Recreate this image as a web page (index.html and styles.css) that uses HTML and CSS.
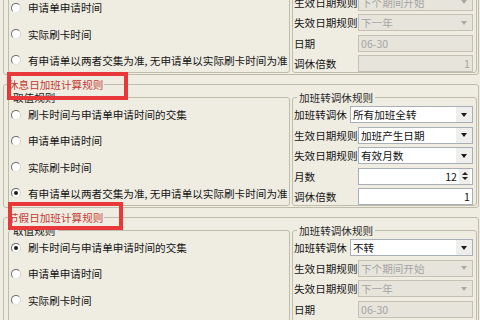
FILE: index.html
```html
<!DOCTYPE html>
<html lang="zh-CN">
<head>
    <meta charset="UTF-8">
    <meta name="viewport" content="width=device-width, initial-scale=1.0">
    <title>加班计算规则</title>
    <link rel="stylesheet" href="styles.css">
</head>
<body>
<div class="page">

    <fieldset class="rule">
        <legend class="rule-title">工作日加班计算规则</legend>
        <div class="rule-body">
            <fieldset class="group pick">
                <legend>取值规则</legend>
                <label class="opt"><input type="radio" name="work" checked><span>刷卡时间与申请单申请时间的交集</span></label>
                <label class="opt"><input type="radio" name="work"><span>申请单申请时间</span></label>
                <label class="opt"><input type="radio" name="work"><span>实际刷卡时间</span></label>
                <label class="opt"><input type="radio" name="work"><span>有申请单以两者交集为准, 无申请单以实际刷卡时间为准</span></label>
            </fieldset>
            <fieldset class="group convert">
                <legend>加班转调休规则</legend>
                <div class="field wide"><span class="name">加班转调休</span><div class="combo"><span class="val">不转</span><i class="arrow"></i></div></div>
                <div class="field"><span class="name">生效日期规则</span><div class="combo off"><span class="val">下个期间开始</span><i class="arrow"></i></div></div>
                <div class="field"><span class="name">失效日期规则</span><div class="combo off"><span class="val">下一年</span><i class="arrow"></i></div></div>
                <div class="field"><span class="name">日期</span><div class="combo off"><span class="val">06-30</span></div></div>
                <div class="field"><span class="name">调休倍数</span><div class="combo off num"><span class="val">1</span></div></div>
            </fieldset>
        </div>
    </fieldset>

    <fieldset class="rule">
        <legend class="rule-title">休息日加班计算规则<span class="mark mark-rest"></span></legend>
        <div class="rule-body">
            <fieldset class="group pick">
                <legend>取值规则</legend>
                <label class="opt"><input type="radio" name="rest"><span>刷卡时间与申请单申请时间的交集</span></label>
                <label class="opt"><input type="radio" name="rest"><span>申请单申请时间</span></label>
                <label class="opt"><input type="radio" name="rest"><span>实际刷卡时间</span></label>
                <label class="opt"><input type="radio" name="rest" checked><span>有申请单以两者交集为准, 无申请单以实际刷卡时间为准</span></label>
            </fieldset>
            <fieldset class="group convert">
                <legend>加班转调休规则</legend>
                <div class="field wide"><span class="name">加班转调休</span><div class="combo"><span class="val">所有加班全转</span><i class="arrow"></i></div></div>
                <div class="field"><span class="name">生效日期规则</span><div class="combo"><span class="val">加班产生日期</span><i class="arrow"></i></div></div>
                <div class="field"><span class="name">失效日期规则</span><div class="combo"><span class="val">有效月数</span><i class="arrow"></i></div></div>
                <div class="field"><span class="name">月数</span><div class="combo num"><span class="val">12</span><i class="spin"><b class="up"></b><b class="down"></b></i></div></div>
                <div class="field"><span class="name">调休倍数</span><div class="combo num"><span class="val">1</span></div></div>
            </fieldset>
        </div>
    </fieldset>

    <fieldset class="rule">
        <legend class="rule-title">节假日加班计算规则<span class="mark mark-holiday"></span></legend>
        <div class="rule-body">
            <fieldset class="group pick">
                <legend>取值规则</legend>
                <label class="opt"><input type="radio" name="holiday" checked><span>刷卡时间与申请单申请时间的交集</span></label>
                <label class="opt"><input type="radio" name="holiday"><span>申请单申请时间</span></label>
                <label class="opt"><input type="radio" name="holiday"><span>实际刷卡时间</span></label>
                <label class="opt"><input type="radio" name="holiday"><span>有申请单以两者交集为准, 无申请单以实际刷卡时间为准</span></label>
            </fieldset>
            <fieldset class="group convert">
                <legend>加班转调休规则</legend>
                <div class="field wide"><span class="name">加班转调休</span><div class="combo"><span class="val">不转</span><i class="arrow"></i></div></div>
                <div class="field"><span class="name">生效日期规则</span><div class="combo off"><span class="val">下个期间开始</span><i class="arrow"></i></div></div>
                <div class="field"><span class="name">失效日期规则</span><div class="combo off"><span class="val">下一年</span><i class="arrow"></i></div></div>
                <div class="field"><span class="name">日期</span><div class="combo off"><span class="val">06-30</span></div></div>
                <div class="field"><span class="name">调休倍数</span><div class="combo off num"><span class="val">1</span></div></div>
            </fieldset>
        </div>
    </fieldset>

</div>
</body>
</html>
```

FILE: styles.css
```css
* {
    box-sizing: border-box;
}
body {
    margin: 0;
    height: 320px;
    overflow: hidden;
    background-color: #efede2;
    color: #141414;
    font-family: "Noto Sans CJK SC", "Noto Sans", sans-serif;
    font-size: 10.6px;
}
.page {
    margin-top: -55px;
}

/* outer group box */
.rule {
    margin: 0 1px 3px 3px;
    padding: 0 1px 1px 4px;
    min-width: 0;
    border: 1px solid #bfbcab;
    border-radius: 3px;
}
.rule-title {
    position: relative;
    padding: 0 1px 0 0;
    height: 13px;
    line-height: 13px;
    color: #c23a33;
    white-space: nowrap;
}
.rule-body {
    display: grid;
    grid-template-columns: 282px 1fr;
    column-gap: 2px;
}

/* red note boxes */
.mark {
    position: absolute;
    height: 28px;
    border: 4px solid #e8383a;
    z-index: 2;
}
.mark-rest {
    top: -6px;
    left: -1px;
    width: 121px;
}
.mark-holiday {
    top: -9px;
    left: 0;
    width: 115px;
}

/* inner group boxes */
.group {
    margin: 0;
    min-width: 0;
    border: 1px solid #bfbcab;
    border-radius: 3px;
}
.group legend {
    height: 13px;
    line-height: 13px;
    white-space: nowrap;
}
.pick {
    padding: 0 0 0 1px;
}
.pick legend {
    padding: 0 3px;
}
.convert {
    padding: 2px 3px 0 1px;
}
.convert legend {
    margin-left: 3px;
    padding: 0 2px;
    color: #2a2a2a;
}

/* radio rows */
.opt {
    display: flex;
    align-items: center;
    height: 21.5px;
    margin-bottom: 4.7px;
    white-space: nowrap;
}
.opt:last-child {
    margin-bottom: 0;
}
.opt input {
    appearance: none;
    -webkit-appearance: none;
    flex: none;
    width: 10px;
    height: 10px;
    margin: 0 7px 0 1px;
    border: 1px solid;
    border-color: #6a6a6a #d6d4ca #e4e2d8 #6a6a6a;
    border-radius: 50%;
    background: #fff;
    position: relative;
}
.opt input:checked::after {
    content: "";
    position: absolute;
    top: 2px;
    left: 2px;
    width: 4px;
    height: 4px;
    border-radius: 50%;
    background: #1c1c1c;
}

/* label + field rows */
.field {
    display: flex;
    align-items: center;
    height: 17px;
    margin-bottom: 3.5px;
    white-space: nowrap;
}
.field:last-child {
    margin-bottom: 0;
}
.field .name {
    flex: none;
    width: 64px;
}
.field.wide .name {
    width: auto;
    margin-right: 3px;
}
.combo {
    flex: 1;
    display: flex;
    align-items: center;
    height: 17px;
    padding-left: 2px;
    border: 1px solid #a9afb6;
    background: #fff;
    color: #111;
    overflow: hidden;
}
.combo .val {
    flex: 1;
    line-height: 15px;
}
.combo.num .val {
    text-align: right;
    padding-right: 2px;
}
.combo.off {
    border-color: #c4c1b4;
    background: #e6e4db;
    color: #a4a4a4;
}
.arrow {
    flex: none;
    display: flex;
    align-items: center;
    justify-content: center;
    width: 16px;
    height: 15px;
    background: #eeeeec;
}
.arrow::before {
    content: "";
    border-top: 4px solid #1a1a1a;
    border-left: 3.5px solid transparent;
    border-right: 3.5px solid transparent;
}
.combo.off .arrow {
    background: transparent;
}
.combo.off .arrow::before {
    border-top-color: #a9a9a9;
}
.spin {
    flex: none;
    display: flex;
    flex-direction: column;
    justify-content: center;
    align-items: center;
    gap: 2px;
    width: 11px;
    height: 15px;
    margin-right: 2px;
    background: #eeeeec;
}
.spin .up {
    border-bottom: 3px solid #222;
    border-left: 3px solid transparent;
    border-right: 3px solid transparent;
}
.spin .down {
    border-top: 3px solid #222;
    border-left: 3px solid transparent;
    border-right: 3px solid transparent;
}
```
